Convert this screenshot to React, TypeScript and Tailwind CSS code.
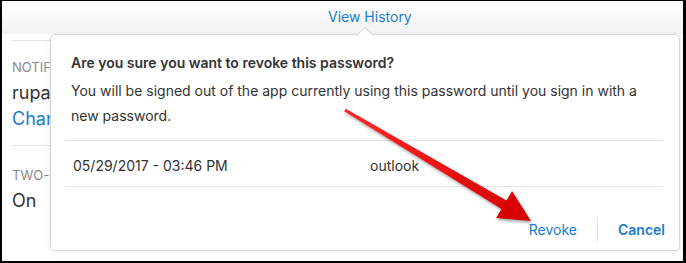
import React from "react";

const FONT = { fontFamily: "Inter, 'Noto Sans', sans-serif" };

function RedArrow() {
  return (
    <svg
      className="absolute left-0 top-0 pointer-events-none"
      width="686"
      height="263"
      viewBox="0 0 686 263"
    >
      <defs>
        <linearGradient id="ar" x1="0" y1="0" x2="1" y2="1">
          <stop offset="0" stopColor="#ff2a2a" />
          <stop offset="1" stopColor="#d40000" />
        </linearGradient>
        <filter id="sh" x="-10%" y="-10%" width="130%" height="130%">
          <feDropShadow dx="1" dy="2" stdDeviation="1.5" floodColor="#000" floodOpacity="0.35" />
        </filter>
      </defs>
      <polygon
        points="344.2,111.3 345.8,108.7 506.5,200.5 512,191 531,221 496,218 501.5,209"
        fill="url(#ar)"
        filter="url(#sh)"
      />
    </svg>
  );
}

export default function App() {
  return (
    <div className="w-[686px] h-[263px] overflow-hidden bg-black" style={FONT}>
      <div className="relative ml-[2px] mt-[1px] w-[681px] h-[260px] bg-white overflow-hidden">
        {/* header */}
        <div className="h-[33px] bg-gradient-to-b from-white to-[#f3f3f3] pl-[326px] pt-[3px]">
          <span className="text-[14px] leading-[20px] text-[#1b7bd0]">View History</span>
        </div>

        {/* settings behind popover */}
        <div className="ml-[10px] pt-[6px] w-[38px] overflow-hidden whitespace-nowrap">
          <div className="border-t border-[#e2e2e2] pt-[18px]">
            <div className="text-[13px] leading-[16px] text-[#8a8a8a]">NOTIF</div>
            <div className="mt-[6px] text-[18px] leading-[24px] text-[#333]">rupaw</div>
            <div className="mt-[2px] text-[18px] leading-[24px] text-[#1b7bd0]">Chang</div>
          </div>
          <div className="mt-[14px] border-t border-[#e2e2e2] pt-[21px]">
            <div className="text-[13px] leading-[16px] text-[#8a8a8a]">TWO-F</div>
            <div className="mt-[6px] text-[18px] leading-[24px] text-[#333]">On</div>
          </div>
        </div>

        {/* popover */}
        <div className="absolute left-[48px] top-[33px] w-[630px] h-[217px] rounded-[5px] border border-[#d6d6d6] bg-white shadow-[0_1px_6px_rgba(0,0,0,0.08)]">
          <div className="absolute left-[308px] top-[-6px] w-[12px] h-[12px] rotate-45 bg-white border-l border-t border-[#d6d6d6]" />
          <div className="relative pl-[20px] pr-[16px] pt-[15px]">
            <div className="text-[14px] leading-[25px] font-semibold text-[#333]">
              Are you sure you want to revoke this password?
            </div>
            <div className="mt-[3px] text-[14px] leading-[25px] text-[#333]">
              You will be signed out of the app currently using this password until you sign in with a
              new password.
            </div>
          </div>
          <div className="mt-[12px] ml-[14px] mr-[16px] border-t border-b border-[#e4e4e4] h-[47px] flex items-center pt-[3px]">
            <span className="pl-[8px] w-[305px] text-[14px] text-[#333]">05/29/2017 - 03:46 PM</span>
            <span className="text-[14px] text-[#333]">outlook</span>
          </div>
          <div className="flex justify-end items-center h-[63px] pr-[14px] pt-[22px]">
            <span className="text-[14px] text-[#1b7bd0]">Revoke</span>
            <div className="mx-[20px] w-px h-[24px] bg-[#e4e4e4]" />
            <span className="text-[14px] font-semibold text-[#1b7bd0]">Cancel</span>
          </div>
        </div>

        <div className="absolute left-[-2px] top-[-1px]">
          <RedArrow />
        </div>
      </div>
    </div>
  );
}
